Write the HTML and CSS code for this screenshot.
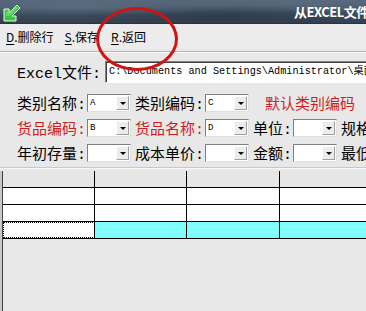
FILE: index.html
```html
<!DOCTYPE html>
<html>
<head>
<meta charset="utf-8">
<link rel="stylesheet" href="styles.css">
</head>
<body>
<div class="win">
  <div class="titlebar">
    <svg class="appicon" width="18" height="18" viewBox="0 0 18 18">
      <path d="M14 1 L17 4 L9 12 L13 12 L13 17 L1 17 L1 5 L6 5 L6 9 Z" fill="#3fc24a" stroke="#e8ffe8" stroke-width="1"/>
      <path d="M14 3 L15 4 L7 12 L3 12 L3 8 Z" fill="#7ee07e" opacity="0.6"/>
    </svg>
    <span class="title">从EXCEL文件</span>
  </div>
  <div class="menubar">
    <span class="mi"><u>D</u>.删除行</span>
    <span class="mi"><u>S</u>.保存</span>
    <span class="mi"><u>R</u>.返回</span>
  </div>
  <div class="sep"></div>
  <div class="form">
    <div class="row excel">
      <span class="lbl">Excel文件:</span>
      <div class="path">C:\Documents and Settings\Administrator\桌面</div>
    </div>
    <div class="row r2">
      <span class="lbl">类别名称:</span>
      <div class="combo"><span class="val">A</span><span class="btn"></span></div>
      <span class="lbl">类别编码:</span>
      <div class="combo"><span class="val">C</span><span class="btn"></span></div>
      <span class="lbl red wide">默认类别编码</span>
    </div>
    <div class="row">
      <span class="lbl red">货品编码:</span>
      <div class="combo"><span class="val">B</span><span class="btn"></span></div>
      <span class="lbl red">货品名称:</span>
      <div class="combo"><span class="val">D</span><span class="btn"></span></div>
      <span class="lbl">单位:</span>
      <div class="combo"><span class="val"></span><span class="btn"></span></div>
      <span class="lbl">规格</span>
    </div>
    <div class="row">
      <span class="lbl">年初存量:</span>
      <div class="combo"><span class="val"></span><span class="btn"></span></div>
      <span class="lbl">成本单价:</span>
      <div class="combo"><span class="val"></span><span class="btn"></span></div>
      <span class="lbl">金额:</span>
      <div class="combo"><span class="val"></span><span class="btn"></span></div>
      <span class="lbl">最低</span>
    </div>
  </div>
  <div class="sep2"></div>
  <div class="grid">
    <div class="gr head"><div class="c"></div><div class="c"></div><div class="c"></div><div class="c"></div></div>
    <div class="gr"><div class="c"></div><div class="c"></div><div class="c"></div><div class="c"></div></div>
    <div class="gr"><div class="c"></div><div class="c"></div><div class="c"></div><div class="c"></div></div>
    <div class="gr sel"><div class="c focus"></div><div class="c"></div><div class="c"></div><div class="c"></div></div>
  </div>
  <div class="circle"></div>
</div>
</body>
</html>
```

FILE: styles.css
```css
html, body {
  margin: 0;
  padding: 0;
}
body {
  width: 366px;
  height: 311px;
  overflow: hidden;
  background: #e8e8e8;
  font-family: "Liberation Mono", "Noto Sans CJK SC", monospace;
}
.win {
  position: relative;
  width: 366px;
  height: 311px;
  overflow: hidden;
  background: #e8e8e8;
}
.titlebar {
  height: 23px;
  border-bottom: 1px solid #2a3340;
  background:
    radial-gradient(ellipse at 20% 30%, rgba(120,140,160,0.35), transparent 40%),
    radial-gradient(ellipse at 60% 70%, rgba(30,40,55,0.4), transparent 45%),
    radial-gradient(ellipse at 85% 20%, rgba(110,130,150,0.3), transparent 35%),
    linear-gradient(#56667a, #3d4c5e 60%, #33404f);
  display: flex;
  align-items: center;
  white-space: nowrap;
}
.appicon {
  margin-left: 3px;
  margin-top: 2px;
  flex: none;
}
.title {
  margin-left: 273px;
  color: #ffffff;
  font-family: "Noto Sans CJK SC", "Liberation Sans", sans-serif;
  font-weight: bold;
  font-size: 13px;
  letter-spacing: -0.5px;
  flex: none;
}
.menubar {
  height: 25px;
  display: flex;
  align-items: center;
  background: #ececec;
  font-family: "Noto Sans CJK SC", "Liberation Sans", sans-serif;
  font-size: 12px;
  color: #000;
}
.mi {
  margin-left: 6px;
  margin-right: 6px;
}
.mi:first-child { margin-left: 6px; margin-right: 5px; }
.mi u { text-underline-offset: 2px; }
.sep {
  height: 0;
  border-top: 1px solid #b4b4b4;
  border-bottom: 1px solid #fafafa;
  margin-top: 2px;
}
.form {
  padding: 8px 0 0 17px;
  height: 103px;
}
.row {
  display: flex;
  align-items: center;
  height: 25px;
  white-space: nowrap;
}
.row.excel {
  height: 22px;
  margin-bottom: 7px;
}
.lbl {
  font-size: 15px;
  color: #000;
  flex: none;
}
.lbl.red { color: #cc1f1f; }
.lbl.wide { margin-left: 12px; }
.path {
  margin-left: 4px;
  height: 20px;
  flex: none;
  width: 300px;
  background: #fff;
  border-top: 1px solid #808080;
  border-left: 1px solid #808080;
  border-bottom: 1px solid #fff;
  box-shadow: inset 1px 1px 0 #404040;
  font-family: "Liberation Mono", "Noto Sans CJK SC", monospace;
  font-size: 10.2px;
  line-height: 20px;
  padding-left: 3px;
  overflow: hidden;
  color: #000;
}
.combo {
  flex: none;
  width: 44px;
  height: 18px;
  margin: 0 4px 0 1px;
  background: #fff;
  border-top: 1px solid #808080;
  border-left: 1px solid #808080;
  border-right: 1px solid #e0e0e0;
  border-bottom: 1px solid #e0e0e0;
  display: flex;
  align-items: stretch;
  box-sizing: border-box;
}
.combo .val {
  flex: 1;
  font-family: "Liberation Mono", monospace;
  font-size: 9px;
  line-height: 16px;
  padding-left: 2px;
  color: #000;
}
.combo .btn {
  width: 13px;
  margin: 1px;
  background: #ececec;
  border: 1px solid;
  border-color: #fff #a0a0a0 #a0a0a0 #fff;
  box-sizing: border-box;
  position: relative;
}
.combo .btn::after {
  content: "";
  position: absolute;
  left: 3px;
  top: 5px;
  border-left: 3px solid transparent;
  border-right: 3px solid transparent;
  border-top: 3px solid #000;
}
.sep2 {
  height: 0;
  border-top: 1px solid #c8c8c8;
  border-bottom: 1px solid #f8f8f8;
  margin-top: 3px;
}
.grid {
  margin-top: 2px;
  margin-left: 2px;
  border-left: 1px solid #404040;
  width: 420px;
  height: 150px;
  box-shadow: -2px 0 0 #c8c8c8;
}
.gr {
  display: flex;
  height: 16px;
  border-bottom: 1px solid #000;
}
.gr .c {
  flex: none;
  width: 91px;
  height: 16px;
  border-right: 1px solid #000;
  background: #fff;
  box-sizing: content-box;
}
.gr .c:nth-child(2) { width: 91px; }
.gr .c:nth-child(3) { width: 92px; }
.gr .c:nth-child(4) { width: 140px; border-right: none; }
.gr.head .c { background: #e6e6e6; }
.gr.sel .c { background: #80ffff; }
.gr.sel .c.focus {
  background: #fff;
  outline: 1px dotted #000;
  outline-offset: -1px;
}
.circle {
  position: absolute;
  left: 96px;
  top: 7px;
  width: 76px;
  height: 58px;
  border: 3px solid #d01414;
  border-radius: 50%;
}
```
